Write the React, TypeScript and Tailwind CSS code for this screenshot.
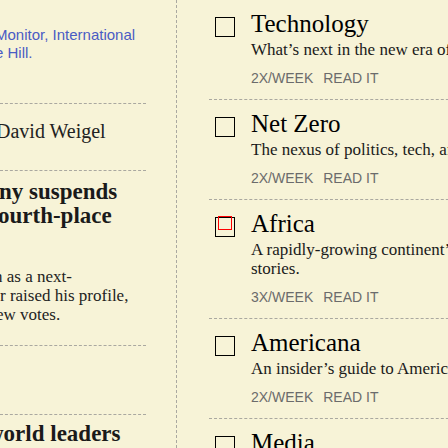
import React from 'react';

const serif = "font-['Liberation_Serif','Times_New_Roman',serif]";
const sans = "font-['Liberation_Sans',Arial,sans-serif]";

type Newsletter = {
    title: string;
    lines: string[];
    freq: string;
    focused?: boolean;
};

const newsletters: Newsletter[] = [
    { title: 'Technology', lines: ['What’s next in the new era of tech.'], freq: '2X/WEEK' },
    { title: 'Net Zero', lines: ['The nexus of politics, tech, and money in the race to net zero.'], freq: '2X/WEEK' },
    { title: 'Africa', lines: ['A rapidly-growing continent’s biggest', 'stories.'], freq: '3X/WEEK', focused: true },
    { title: 'Americana', lines: ['An insider’s guide to America.'], freq: '2X/WEEK' },
    { title: 'Media', lines: ['The business of news, and the people behind it.'], freq: '2X/WEEK' },
];

const NewsletterRow: React.FC<{ item: Newsletter }> = ({ item }) => (
    <div className="flex items-start border-b border-dashed border-[#aaa8a0] pt-[9px] pb-[11px]">
        <div className="relative ml-[6px] mt-[8px] h-[20px] w-[20px] shrink-0 border border-black">
            {item.focused && (
                <span className="absolute left-[2px] top-[-2px] h-[14px] w-[14px] border border-[#ff0000]" />
            )}
        </div>
        <div className="ml-[16px] min-w-0">
            <h3 className={`${serif} text-[25px] leading-[30px] font-normal text-black whitespace-nowrap`}>{item.title}</h3>
            <p className={`${serif} mt-px text-[17px] leading-[19px] text-[#1a1a1a] whitespace-nowrap`}>
                {item.lines.map((line, i) => (
                    <span key={i} className="block">{line}</span>
                ))}
            </p>
            <div className={`${sans} mt-[9px] flex gap-[10px] text-[14px] leading-[20px] text-[#6b6b6b] whitespace-nowrap`}>
                <span>{item.freq}</span>
                <span>READ IT</span>
            </div>
        </div>
    </div>
);

const App: React.FC = () => {
    return (
        <div className="flex h-[448px] w-[448px] overflow-hidden bg-[#f7f3d7]">
            {/* left column, cut off at the window edge */}
            <div className="w-[146px] shrink-0">
                <div className={`${sans} h-[104px] border-b border-dashed border-[#aaa8a0] pt-[26px] text-[15px] leading-[18px] text-[#4a5cc4] whitespace-nowrap`}>
                    <div className="-ml-[5px]">Monitor, International</div>
                    <div className="-ml-[5px]">e Hill.</div>
                </div>
                <div className={`${serif} h-[67px] border-b border-dashed border-[#aaa8a0] pt-[15px] text-[20px] leading-[24px] text-[#222] whitespace-nowrap`}>
                    <div className="-ml-[4px]">David Weigel</div>
                </div>
                <div className={`${serif} h-[175px] border-b border-dashed border-[#aaa8a0] pt-[9px] whitespace-nowrap`}>
                    <h2 className="text-[23px] leading-[24px] font-bold text-[#1a1a1a]">
                        <span className="-ml-px block">ny suspends</span>
                        <span className="-ml-[2px] block">ourth-place</span>
                    </h2>
                    <p className="mt-[39px] text-[17px] leading-[19px] text-[#222]">
                        <span className="-ml-[6px] block">n as a next-</span>
                        <span className="block">r raised his profile,</span>
                        <span className="-ml-[4px] block">ew votes.</span>
                    </p>
                </div>
                <div className="h-[69px] border-b border-dashed border-[#aaa8a0]" />
                <div className={`${serif} pt-[7px] whitespace-nowrap`}>
                    <h2 className="-ml-[13px] text-[23px] leading-[24px] font-bold text-[#1a1a1a]">world leaders</h2>
                </div>
            </div>

            {/* newsletter list */}
            <div className="ml-[30px] h-full shrink-0 border-l border-dashed border-[#aaa8a0] pl-[32px]">
                <div className="w-[260px]">
                    {newsletters.map((n) => (
                        <NewsletterRow key={n.title} item={n} />
                    ))}
                </div>
            </div>
        </div>
    );
};

export default App;
